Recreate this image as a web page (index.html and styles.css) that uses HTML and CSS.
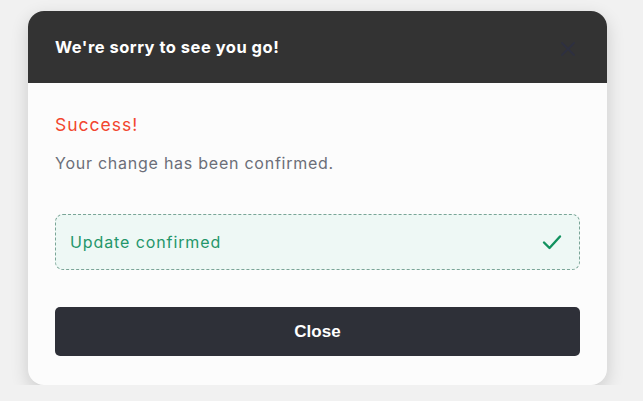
FILE: index.html
```html
<!DOCTYPE html>
<html lang="en">
<head>
<meta charset="UTF-8">
<title>We're sorry to see you go!</title>
<link rel="stylesheet" href="styles.css">
</head>
<body>

<div class="modal">
  <div class="modal-head">
    <div class="modal-title">We're sorry to see you go!</div>
    <div class="modal-x">
      <svg width="14" height="14" viewBox="0 0 14 14"><path d="M1 1L13 13M13 1L1 13" stroke="#2e3040" stroke-width="1.8" stroke-linecap="round"/></svg>
    </div>
  </div>

  <div class="modal-body">
    <div class="status">Success!</div>
    <div class="message">Your change has been confirmed.</div>

    <div class="confirm">
      <span>Update confirmed</span>
      <svg width="20" height="16" viewBox="0 0 20 16"><path d="M2 8.5L7.5 14L18 2.5" fill="none" stroke="#12925f" stroke-width="2.4" stroke-linecap="round" stroke-linejoin="round"/></svg>
    </div>

    <button class="close-btn">Close</button>
  </div>
</div>

</body>
</html>
```

FILE: styles.css
```css
body{
  margin:0;
  background:#f1f1f1;
  font-family:Inter,"Noto Sans",sans-serif;
}

.modal{
  width:579px;
  margin:11px 0 0 28px;
  background:#fcfcfc;
  border-radius:16px;
  overflow:hidden;
  box-shadow:0 6px 18px rgba(0,0,0,0.16);
}

.modal-head{
  height:72px;
  background:#333333;
  display:flex;
  align-items:center;
  justify-content:space-between;
  padding:0 32px 0 27px;
  box-sizing:border-box;
}

.modal-title{
  color:#fff;
  font-size:16.5px;
  font-weight:700;
  letter-spacing:0.5px;
  margin-top:-1px;
}

.modal-x{
  display:flex;
  margin-top:4px;
}

.modal-body{
  padding:31px 27px 29px;
}

.status{
  color:#f2462e;
  font-size:17.5px;
  letter-spacing:1px;
  line-height:22px;
}

.message{
  color:#6b6e78;
  font-size:16px;
  letter-spacing:0.75px;
  margin-top:17px;
  line-height:20px;
}

.confirm{
  margin-top:41px;
  height:56px;
  box-sizing:border-box;
  border:1px dashed #7aa597;
  border-radius:8px;
  background:#eef8f5;
  display:flex;
  align-items:center;
  justify-content:space-between;
  padding:0 17px 0 14px;
  color:#24966a;
  font-size:16px;
  letter-spacing:0.9px;
}

.close-btn{
  display:block;
  width:100%;
  height:49px;
  margin-top:37px;
  border:none;
  border-radius:5px;
  background:#2e3038;
  color:#fff;
  font-family:"Liberation Sans",Arial,sans-serif;
  font-weight:700;
  font-size:17px;
}
```
